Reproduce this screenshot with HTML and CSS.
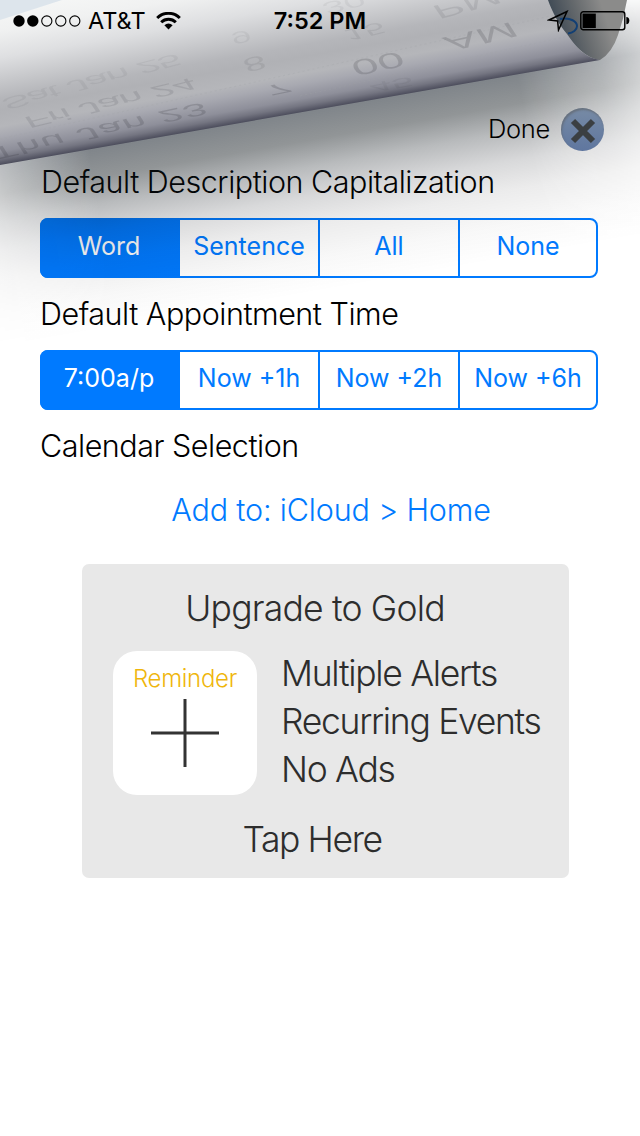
FILE: index.html
```html
<!DOCTYPE html>
<html lang="en">

<head>
    <meta charset="UTF-8">
    <meta name="viewport" content="width=device-width, initial-scale=1.0">
    <title>Settings</title>
    <link rel="stylesheet" href="styles.css">
</head>

<body>
    <div class="screen">
        <header class="status-bar">
            <div class="carrier">
                <svg class="signal" width="68" height="12" viewBox="0 0 68 12">
                    <circle cx="6" cy="6" r="5.7" />
                    <circle cx="19.8" cy="6" r="5.7" />
                    <circle class="empty" cx="33.8" cy="6" r="5.1" />
                    <circle class="empty" cx="47.8" cy="6" r="5.1" />
                    <circle class="empty" cx="61.8" cy="6" r="5.1" />
                </svg>
                <span class="carrier-name">AT&amp;T</span>
                <svg class="wifi" width="25" height="18" viewBox="0 0 25 18">
                    <path d="M1.2 6 A16 16 0 0 1 23.8 6" />
                    <path d="M5.2 10.2 A10.4 10.4 0 0 1 19.8 10.2" />
                    <path class="solid" d="M8.4 13.2 A6 6 0 0 1 16.6 13.2 L12.5 17.6 Z" />
                </svg>
            </div>
            <div class="clock">7:52 PM</div>
            <div class="indicators">
                <svg class="location" width="22" height="22" viewBox="0 0 22 22">
                    <path d="M20 1.5 L2 10 L10.6 11 L11.5 20 Z" />
                </svg>
                <svg class="battery" width="50" height="20" viewBox="0 0 50 20">
                    <rect class="shell" x="0.8" y="0.8" width="44" height="18" rx="2.5" />
                    <rect x="2.6" y="2.6" width="13.2" height="14.4" />
                    <path d="M46.3 6 A3 3.6 0 0 1 46.3 13.2 Z" />
                </svg>
            </div>
        </header>

        <div class="done-row">
            <span class="done-label">Done</span>
            <button class="done-button" aria-label="Close">
                <svg width="26" height="26" viewBox="0 0 26 26">
                    <path d="M3 3 L23 23 M23 3 L3 23" />
                </svg>
            </button>
        </div>

        <main class="settings">
            <h2 class="title first">Default Description Capitalization</h2>
            <div class="segments">
                <button class="segment selected">Word</button>
                <button class="segment">Sentence</button>
                <button class="segment">All</button>
                <button class="segment">None</button>
            </div>

            <h2 class="title">Default Appointment Time</h2>
            <div class="segments">
                <button class="segment selected">7:00a/p</button>
                <button class="segment">Now +1h</button>
                <button class="segment">Now +2h</button>
                <button class="segment">Now +6h</button>
            </div>

            <h2 class="title">Calendar Selection</h2>
            <a class="calendar-link" href="#">Add to: iCloud &gt; Home</a>
        </main>

        <section class="upgrade">
            <div class="upgrade-title">Upgrade to Gold</div>
            <div class="upgrade-body">
                <div class="reminder">
                    <span class="reminder-label">Reminder</span>
                    <svg width="68" height="68" viewBox="0 0 68 68">
                        <path d="M34 0 V68 M0 34 H68" />
                    </svg>
                </div>
                <ul class="features">
                    <li>Multiple Alerts</li>
                    <li>Recurring Events</li>
                    <li>No Ads</li>
                </ul>
            </div>
            <div class="upgrade-tap">Tap Here</div>
        </section>

        <!-- Curled page lying over the settings -->
        <svg class="curl" width="640" height="380" viewBox="0 0 640 380">
            <defs>
                <linearGradient id="shade" gradientUnits="userSpaceOnUse" x1="0" y1="-60" x2="0" y2="180">
                    <stop offset="0" stop-color="#0a141e" stop-opacity="0" />
                    <stop offset="0.12" stop-color="#0a141e" stop-opacity="0.3" />
                    <stop offset="0.25" stop-color="#0a141e" stop-opacity="0.52" />
                    <stop offset="0.37" stop-color="#0c1418" stop-opacity="0.45" />
                    <stop offset="0.48" stop-color="#0c141a" stop-opacity="0.29" />
                    <stop offset="0.6" stop-color="#0c1018" stop-opacity="0.16" />
                    <stop offset="0.72" stop-color="#101014" stop-opacity="0.08" />
                    <stop offset="0.86" stop-color="#101010" stop-opacity="0.03" />
                    <stop offset="1" stop-color="#101010" stop-opacity="0" />
                </linearGradient>
                <linearGradient id="ends" gradientUnits="userSpaceOnUse" x1="-60" y1="0" x2="690" y2="0">
                    <stop offset="0" stop-color="#222" />
                    <stop offset="0.08" stop-color="#888" />
                    <stop offset="0.2" stop-color="#fff" />
                    <stop offset="0.78" stop-color="#fff" />
                    <stop offset="0.89" stop-color="#aaa" />
                    <stop offset="1" stop-color="#222" />
                </linearGradient>
                <mask id="ends-mask" maskUnits="userSpaceOnUse" x="-60" y="-60" width="780" height="260">
                    <rect x="-60" y="-60" width="780" height="260" fill="url(#ends)" />
                </mask>
                <linearGradient id="tube" gradientUnits="userSpaceOnUse" x1="0" y1="-165" x2="0" y2="0">
                    <stop offset="0" stop-color="#f8f9f8" />
                    <stop offset="0.2" stop-color="#f0f1f1" />
                    <stop offset="0.36" stop-color="#dedfe1" />
                    <stop offset="0.5" stop-color="#c6c7ca" />
                    <stop offset="0.6" stop-color="#b5b6ba" />
                    <stop offset="0.67" stop-color="#b0b1b5" />
                    <stop offset="0.77" stop-color="#b5b6ba" />
                    <stop offset="0.83" stop-color="#a8a9b1" />
                    <stop offset="0.92" stop-color="#8e8f9a" />
                    <stop offset="0.96" stop-color="#747581" />
                    <stop offset="1" stop-color="#4c4d5c" />
                </linearGradient>
                <linearGradient id="inside" gradientUnits="userSpaceOnUse" x1="556" y1="28" x2="604" y2="12">
                    <stop offset="0" stop-color="#3f4a55" />
                    <stop offset="0.5" stop-color="#666a6d" />
                    <stop offset="1" stop-color="#8b8b8a" />
                </linearGradient>
                <clipPath id="page">
                    <path d="M0 0 H548 C553 14 560 26 567 34 C576 47 585 58 600 60 L0 165 Z" />
                </clipPath>
            </defs>
            <g transform="translate(0 165) rotate(-9.93)">
                <rect x="-60" y="-60" width="780" height="260" fill="url(#shade)" mask="url(#ends-mask)" />
            </g>
            <path fill="url(#inside)" d="M546 0 C553 16 566 38 580 50 Q590 59 600 60 Q612 53 618 35 Q624 18 627 0 Z" />
            <path class="inside-ring" d="M560 19 C571 17 577 22 577 26 C577 30 573 33 568 33.5" />
            <g clip-path="url(#page)">
                <rect x="-40" y="-200" width="720" height="201" fill="url(#tube)" transform="translate(0 165) rotate(-9.93)" />
                <path fill="#dde5ec" d="M0 0 H62 L0 20 Z" />
                <path class="rule" d="M0 139 L640 -4 M300 96 L640 20" />
                <g class="ghost">
                    <text opacity="0.16" textLength="188" transform="translate(-12 149) rotate(-12.3) skewX(20) scale(1.17 -.5)">Thu Jan 23</text>
                    <text opacity="0.1" textLength="152" transform="translate(22 118) rotate(-13.4) skewX(20) scale(1.15 -.48)">Fri Jan 24</text>
                    <text opacity="0.05" textLength="160" transform="translate(-1 100) rotate(-14.8) skewX(20) scale(1.15 -.48)">Sat Jan 25</text>
                    <text opacity="0.05" transform="translate(229 34) rotate(-14) skewX(10) scale(1 -.48)">9</text>
                    <text opacity="0.08" transform="translate(241 60) rotate(-14) skewX(10) scale(1.12 -.56)">8</text>
                    <text opacity="0.17" transform="translate(263 87) rotate(-12) skewX(28) scale(1.2 -.42)">7</text>
                    <text opacity="0.05" transform="translate(320 4) rotate(-14) skewX(20) scale(1.05 -.48)">30</text>
                    <text opacity="0.07" transform="translate(342 31) rotate(-14) skewX(20) scale(1 -.48)">15</text>
                    <text opacity="0.16" transform="translate(349 62) rotate(-12) skewX(14) scale(1.3 -.62)">00</text>
                    <text opacity="0.05" transform="translate(368 84) rotate(-10) skewX(14) scale(1.1 -.38)">45</text>
                    <text opacity="0.09" transform="translate(430 7) rotate(-15) skewX(20) scale(1.25 -.58)">PM</text>
                    <text opacity="0.16" transform="translate(441 38) rotate(-13) skewX(20) scale(1.35 -.62)">AM</text>
                </g>
            </g>
        </svg>
    </div>
</body>

</html>
```

FILE: styles.css
```css
/* General Styles */
body {
    margin: 0;
    background: #fff;
    color: #000;
    font-family: Inter, "Liberation Sans", sans-serif;
    font-weight: 300;
}

.screen {
    position: relative;
    width: 640px;
    height: 1136px;
    overflow: hidden;
    background: #fff;
}

button {
    margin: 0;
    padding: 0;
    border: none;
    background: none;
    font: inherit;
}

/* Status bar */
.status-bar {
    position: relative;
    z-index: 2;
    display: grid;
    grid-template-columns: 1fr auto 1fr;
    align-items: center;
    height: 41px;
    padding: 0 10px 0 13px;
    font-size: 23.5px;
    line-height: 41px;
}

.carrier,
.indicators {
    display: flex;
    align-items: center;
}

.carrier-name {
    margin: 0 10px 0 7px;
    font-weight: 400;
}

.signal .empty {
    fill: none;
    stroke: #000;
    stroke-width: 1.1;
}

.wifi {
    fill: none;
    stroke: #000;
    stroke-width: 3;
}

.wifi .solid {
    fill: #000;
    stroke: none;
}

.clock {
    padding-right: 3px;
    font-weight: 600;
}

.indicators {
    justify-content: flex-end;
    gap: 11px;
}

.location {
    fill: none;
    stroke: #000;
    stroke-width: 1.5;
}

.battery .shell {
    fill: none;
    stroke: #000;
    stroke-width: 1.4;
}

/* Done */
.done-row {
    position: relative;
    z-index: 2;
    display: flex;
    justify-content: flex-end;
    align-items: center;
    gap: 11px;
    height: 43px;
    margin-top: 67px;
    padding-right: 36px;
}

.done-label {
    padding-bottom: 2px;
    font-size: 25.5px;
    letter-spacing: -0.3px;
}

.done-button {
    display: flex;
    align-items: center;
    justify-content: center;
    width: 43px;
    height: 43px;
    border-radius: 50%;
    background: linear-gradient(#778ba5, #5f769f);
    box-shadow: inset 1px 2px 2px rgba(90, 90, 90, 0.5);
}

.done-button svg {
    margin-top: 3px;
    fill: none;
    stroke: #3b3f42;
    stroke-width: 6;
}

/* Settings */
.settings {
    padding: 13px 42px 0 40px;
}

.title {
    margin: 18px 0;
    font-size: 30.5px;
    font-weight: 300;
    line-height: 36px;
    letter-spacing: -0.48px;
    white-space: nowrap;
}

.title.first {
    margin-top: 0;
    padding-left: 1px;
}

.segments {
    display: grid;
    grid-template-columns: 138px 140px 140px 1fr;
    height: 60px;
    box-sizing: border-box;
    border: 2px solid #007aff;
    border-radius: 8px;
}

.segment {
    padding: 0 0 4px;
    border-right: 2px solid #007aff;
    color: #007aff;
    font-size: 25px;
    font-weight: 400;
    letter-spacing: 0;
}

.segment:last-child {
    border-right: none;
}

.segment.selected {
    margin: -2px 0 -2px -2px;
    border-radius: 8px 0 0 8px;
    background: #007aff;
    color: #fff;
}

.calendar-link {
    display: block;
    margin-top: 28px;
    padding-left: 24px;
    color: #007aff;
    font-size: 30.5px;
    line-height: 36px;
    letter-spacing: -0.15px;
    text-align: center;
    text-decoration: none;
}

/* Upgrade */
.upgrade {
    box-sizing: border-box;
    width: 487px;
    height: 314px;
    margin: 36px 0 0 82px;
    padding-top: 21px;
    border-radius: 7px;
    background: #e8e8e8;
    color: #2d2d2d;
    font-size: 35.5px;
    line-height: 48px;
    letter-spacing: -0.8px;
}

.upgrade-title {
    padding-right: 21px;
    text-align: center;
}

.upgrade-body {
    display: flex;
    align-items: center;
    gap: 24px;
    margin: 17px 0 20px 31px;
}

.reminder {
    display: flex;
    flex-direction: column;
    align-items: center;
    width: 144px;
    height: 144px;
    border-radius: 24px;
    background: #fff;
}

.reminder-label {
    padding-top: 14px;
    color: #efb60c;
    font-size: 24px;
    line-height: 28px;
    letter-spacing: -0.3px;
}

.reminder svg {
    margin-top: 6px;
    stroke: #333;
    stroke-width: 3;
}

.features {
    margin: 0;
    padding: 0 0 2px;
    letter-spacing: -1.3px;
    list-style: none;
    white-space: nowrap;
}

.upgrade-tap {
    padding-right: 27px;
    letter-spacing: -1.4px;
    text-align: center;
}

/* Page curl */
.curl {
    position: absolute;
    top: 0;
    left: 0;
    z-index: 1;
    pointer-events: none;
}

.inside-ring {
    fill: none;
    stroke: #123f74;
    stroke-width: 2;
}

.rule {
    fill: none;
    stroke: #a2a3a8;
    stroke-width: 0.6;
    stroke-dasharray: 2 3;
    opacity: 0.5;
}

.ghost {
    fill: #1c1c24;
    font-family: "Liberation Sans", sans-serif;
    font-size: 36px;
}
```
